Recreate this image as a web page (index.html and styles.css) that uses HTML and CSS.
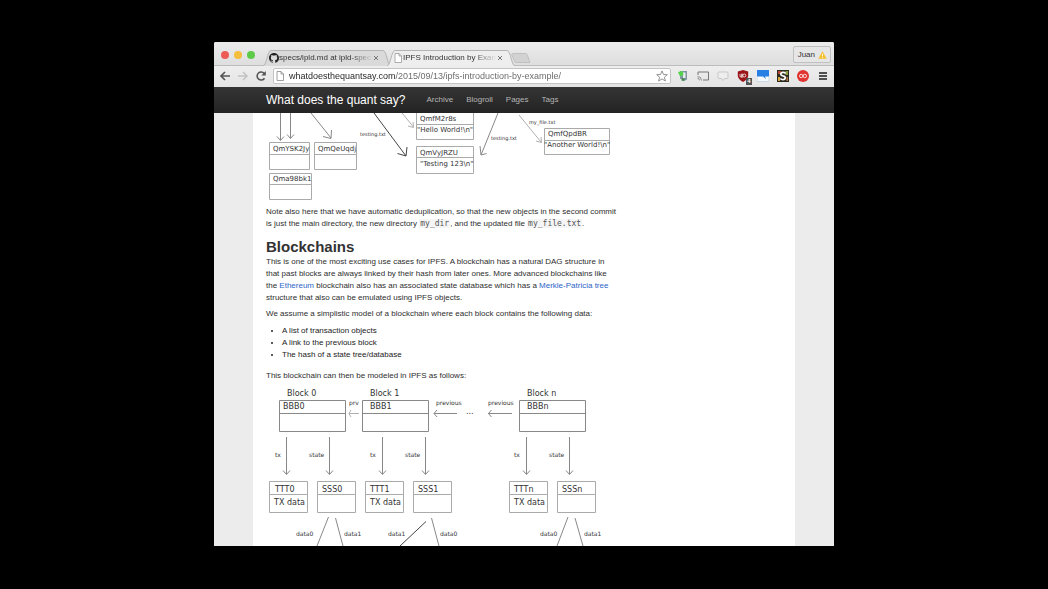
FILE: index.html
```
<!DOCTYPE html>
<html lang="en">
<head>
<meta charset="utf-8">
<title>IPFS Introduction by Example</title>
<link rel="stylesheet" href="styles.css">
</head>
<body>
<div class="window">
  <header class="tabstrip">
    <div class="lights"><button class="light red" aria-label="Close"></button><button class="light yellow" aria-label="Minimize"></button><button class="light green" aria-label="Zoom"></button></div>
    <div class="tabs">
      <div class="tab">
        <svg class="tab-shape" viewBox="0 0 128 16" preserveAspectRatio="none"><path d="M0 16 C4 15 4 1 8 .5 H120 C124 1 124 15 128 16" fill="#dadada" stroke="#b4b4b4"/></svg>
        <svg class="icon10" viewBox="0 0 16 16"><path fill="#222" d="M8 0C3.58 0 0 3.58 0 8c0 3.54 2.29 6.53 5.47 7.59.4.07.55-.17.55-.38 0-.19-.01-.82-.01-1.49-2.01.37-2.53-.49-2.69-.94-.09-.23-.48-.94-.82-1.13-.28-.15-.68-.52-.01-.53.63-.01 1.08.58 1.23.82.72 1.21 1.87.87 2.33.66.07-.52.28-.87.51-1.07-1.78-.2-3.64-.89-3.64-3.95 0-.87.31-1.59.82-2.15-.08-.2-.36-1.02.08-2.12 0 0 .67-.21 2.2.82a7.6 7.6 0 0 1 4 0c1.53-1.04 2.2-.82 2.2-.82.44 1.1.16 1.92.08 2.12.51.56.82 1.27.82 2.15 0 3.07-1.87 3.75-3.65 3.95.29.25.54.73.54 1.48 0 1.07-.01 1.93-.01 2.2 0 .21.15.46.55.38A8 8 0 0 0 16 8c0-4.42-3.58-8-8-8z"/></svg>
        <span class="tab-title">specs/ipld.md at ipld-spec</span>
        <button class="close" aria-label="Close tab"><svg viewBox="0 0 6 6"><path d="M1 1 5 5M5 1 1 5" stroke="#777"/></svg></button>
      </div>
      <div class="tab active">
        <svg class="tab-shape" viewBox="0 0 128 16" preserveAspectRatio="none"><path d="M0 16 C4 15 4 1 8 .5 H120 C124 1 124 15 128 16" fill="#eee" stroke="#b4b4b4"/></svg>
        <svg class="icon10" viewBox="0 0 10 10"><path d="M2 .5H6L8.500 3V9.500H2ZM6 .5V3H8.500" fill="#fff" stroke="#999" stroke-width=".8"/></svg>
        <span class="tab-title">IPFS Introduction by Exam</span>
        <button class="close" aria-label="Close tab"><svg viewBox="0 0 6 6"><path d="M1 1 5 5M5 1 1 5" stroke="#777"/></svg></button>
      </div>
      <button class="newtab" aria-label="New tab"><svg viewBox="0 0 20 10"><path d="M1.500.5H14C16 .5 16 1 17 4L19 9.500H6C4 9.500 3.500 9 3 7L.8 2Q.4.5 1.500.5Z" fill="#d2d2d2" stroke="#c0c0c0"/></svg></button>
    </div>
    <button class="profile">Juan <svg viewBox="0 0 10 9"><path d="M5 .4 9.700 8.600H.3Z" fill="#f6c12d"/><path d="M5 3V6M5 6.800V7.800" stroke="#fff" stroke-width="1"/></svg></button>
  </header>

  <div class="toolbar">
    <button class="tool" aria-label="Back"><svg viewBox="0 0 12 12"><path d="M11 6H2M6 2 2 6 6 10" fill="none" stroke="#555" stroke-width="1.700"/></svg></button>
    <button class="tool" aria-label="Forward"><svg viewBox="0 0 12 12"><path d="M1 6H10M6 2 10 6 6 10" fill="none" stroke="#c2c2c2" stroke-width="1.500"/></svg></button>
    <button class="tool" aria-label="Reload"><svg viewBox="0 0 12 12"><path d="M9.500 8.200A4 4 0 1 1 9.200 3.500" fill="none" stroke="#555" stroke-width="1.600"/><path d="M10.800 1V5.500H6.300Z" fill="#555"/></svg></button>
    <div class="address">
      <svg class="icon10" viewBox="0 0 10 10"><path d="M2 .5H6L8.500 3V9.500H2ZM6 .5V3H8.500" fill="#fff" stroke="#888" stroke-width=".8"/></svg>
      <input class="url" type="text" aria-label="Address" value="whatdoesthequantsay.com/2015/09/13/ipfs-introduction-by-example/">
      <button class="tool" aria-label="Bookmark"><svg viewBox="0 0 12 12"><path d="M6 .9 7.500 4.500 11.300 4.700 8.400 7.200 9.400 11 6 8.900 2.600 11 3.600 7.200.7 4.700 4.500 4.500Z" fill="#fff" stroke="#888" stroke-width=".9"/></svg></button>
    </div>
    <div class="extensions">
      <button class="tool" aria-label="Notes"><svg viewBox="0 0 12 12"><path d="M3 1H10V9.500L7 11V9H3Z" fill="#8296a0"/><path d="M6 2.500H8.500V8H6Z" fill="#e7eef0"/><path d="M1 2 5.500 1 6.500 5 3 6.500Z" fill="#54d34d"/><circle cx="6" cy="9.500" r="1.500" fill="#43884b"/></svg></button>
      <button class="tool" aria-label="Cast"><svg viewBox="0 0 12 12"><path d="M1 5V2H11.500V10H6" fill="none" stroke="#777"/><path d="M.5 6.500A4 4 0 0 1 4.500 10.500M.5 8.300A2 2 0 0 1 2.500 10.300" fill="none" stroke="#777" stroke-width=".8"/></svg></button>
      <button class="tool" aria-label="Comments"><svg viewBox="0 0 12 12"><path d="M2 2H10Q11 2 11 3V7.500Q11 8.500 10 8.500H7.500L6 10.500 4.500 8.500H2Q1 8.500 1 7.500V3Q1 2 2 2Z" fill="#eee" stroke="#c7c7c7"/></svg></button>
      <button class="tool blocker" aria-label="Blocker, 4 blocked"><svg viewBox="0 0 12 12"><path d="M6 0 11.200 1.500V6Q10.500 9.500 6 12 1.500 9.500.8 6V1.500Z" fill="#9a1419"/><path d="M3 4V6Q3 7 4 7T5 6V4M5 3.500V8" fill="none" stroke="#fff" stroke-width=".8"/><circle cx="7.300" cy="5.500" r="1.500" fill="none" stroke="#fff" stroke-width=".8"/></svg><span class="badge">4</span></button>
      <button class="tool" aria-label="Dashboard"><svg viewBox="0 0 12 12"><path d="M0 0H12V12H0Z" fill="#f6f9fc"/><path d="M0 0H12V6.500H8L9 9 6 6.500H0Z" fill="#287fe3"/><path d="M0 6V11.500H12V6" fill="none" stroke="#b5cbe2" stroke-width=".7"/></svg></button>
      <button class="tool" aria-label="Scripts"><svg viewBox="0 0 12 12"><path d="M0 0H12V12H0Z" fill="#292a20"/><path d="M1 1H4V4H1Z" fill="#b94731"/><path d="M8.500 1H11V5H8.500Z" fill="#8a9a41"/><path d="M1 7H3V11H1Z" fill="#d4a33b"/><path d="M9.500 7H11V11H9.500Z" fill="#b87343"/><path d="M8.700 3.500Q7.500 2.200 5.800 2.400 3.700 2.700 3.800 4.300 4 5.500 6 5.900 8.400 6.300 8.300 8 8 9.700 6 9.700 4.500 9.700 3.300 8.500" fill="none" stroke="#fff" stroke-width="1.700"/></svg></button>
      <button class="tool" aria-label="Share"><svg viewBox="0 0 12 12"><circle cx="6" cy="6" r="6" fill="#df3430"/><circle cx="4.200" cy="6" r="1.700" fill="none" stroke="#fff" stroke-width=".8"/><circle cx="7.800" cy="6" r="1.700" fill="none" stroke="#fff" stroke-width=".8"/></svg></button>
      <button class="tool" aria-label="Menu"><svg viewBox="0 0 12 12"><path d="M2 3H10M2 6H10M2 9H10" stroke="#505050" stroke-width="1.800"/></svg></button>
    </div>
  </div>

  <nav class="sitebar">
    <a class="brand" href="#">What does the quant say?</a>
    <a href="#">Archive</a><a href="#">Blogroll</a><a href="#">Pages</a><a href="#">Tags</a>
  </nav>

  <div class="page">
    <main class="article">
      <svg class="diagram objects" width="365" height="88" viewBox="266 113 365 88" role="img" aria-label="Object graph after the second commit">
        <g class="line">
          <path d="M280.500 113V140M277 136.500 280.500 140.500 284 136.500M290.500 113V138M287 134.500 290.500 138.500 294 134.500M311 113 331 138M323 136.500 331 138.500 331.500 130"/>
          <path d="M498 113 481 155M480 146 481 155 486.500 153.500"/>
          <path class="faint" d="M402 113 413.500 127M408 126 413.500 127.500 413 122M519 115 541 142M536 141 541.500 142.500 541 137"/>
          <path class="dark" d="M374 113 406 156M397.500 153.500 406 156 407 147"/>
        </g>
        <g class="box">
          <path d="M269.500 142.500H309.500V169.500H269.500ZM269.500 154.500H309.500M314.500 142.500H356.500V169.500H314.500ZM314.500 154.500H356.500M269.500 173.500H311.500V199.500H269.500ZM269.500 184.500H311.500"/>
          <path d="M416.500 112.500H473.500V139.500H416.500ZM416.500 124.500H473.500M416.500 146.500H473.500V173.500H416.500ZM416.500 157.500H473.500M544.500 128.500H609.500V154.500H544.500ZM544.500 140.500H609.500"/>
        </g>
        <g class="node">
          <text x="273" y="151">QmYSK2Jy</text><text x="318" y="151">QmQeUqdj</text><text x="273" y="181">Qma98bk1</text>
          <text x="420" y="121">QmfM2r8s</text><text x="417" y="132">"Hello World!\n"</text>
          <text x="420" y="155">QmVyJRZU</text><text x="420" y="166">"Testing 123\n"</text>
          <text x="548" y="136">QmfQpdBR</text><text x="544" y="147">"Another World!\n"</text>
        </g>
        <g class="edge"><text x="360" y="136">testing.txt</text><text x="491" y="140">testing.txt</text><text x="529" y="124">my_file.txt</text></g>
      </svg>

      <p class="intro">Note also here that we have automatic deduplication, so that the new objects in the second commit<br>is just the main directory, the new directory <code>my_dir</code>, and the updated file <code>my_file.txt</code>.</p>
      <h1>Blockchains</h1>
      <p>This is one of the most exciting use cases for IPFS. A blockchain has a natural DAG structure in<br>that past blocks are always linked by their hash from later ones. More advanced blockchains like<br>the <a href="#">Ethereum</a> blockchain also has an associated state database which has a <a href="#">Merkle-Patricia tree</a><br>structure that also can be emulated using IPFS objects.</p>
      <p>We assume a simplistic model of a blockchain where each block contains the following data:</p>
      <ul><li>A list of transaction objects</li><li>A link to the previous block</li><li>The hash of a state tree/database</li></ul>
      <p>This blockchain can then be modeled in IPFS as follows:</p>

      <svg class="diagram chain" width="365" height="160" viewBox="266 386 365 160" role="img" aria-label="Blockchain modeled as linked objects">
        <g class="box">
          <path class="strong" d="M279.500 400.500H345.500V431.500H279.500ZM279.500 413.500H345.500M362.500 400.500H428.500V431.500H362.500ZM362.500 413.500H428.500M519.500 400.500H585.500V431.500H519.500ZM519.500 413.500H585.500"/>
          <path d="M269.500 481.500H307.500V512.500H269.500ZM269.500 494.500H307.500M317.500 481.500H355.500V512.500H317.500ZM317.500 494.500H355.500M365.500 481.500H403.500V512.500H365.500ZM365.500 494.500H403.500M413.500 481.500H451.500V512.500H413.500ZM413.500 494.500H451.500M509.500 481.500H547.500V512.500H509.500ZM509.500 494.500H547.500M557.500 481.500H595.500V512.500H557.500ZM557.500 494.500H595.500"/>
        </g>
        <g class="line">
          <path d="M286.500 437V474M283 470.500 286.500 474.500 290 470.500M329.500 437V474M326 470.500 329.500 474.500 333 470.500M382.500 437V474M379 470.500 382.500 474.500 386 470.500M425.500 437V474M422 470.500 425.500 474.500 429 470.500M526.500 437V474M523 470.500 526.500 474.500 530 470.500M569.500 437V474M566 470.500 569.500 474.500 573 470.500"/>
          <path d="M434 413.500H457M437 410 434 413.500 437 417M488 413.500H512M491.500 410 488.500 413.500 491.500 417"/>
          <path class="faint" d="M349 413.500H359M351 410 349 413.500 351 417"/>
          <path d="M328.500 517 317 546M335.500 518 343 546M431.500 518 439 546M568 517 557 546M575 518 583 546"/>
          <path class="dark" d="M426 521.500 400 546"/>
        </g>
        <g class="node">
          <text x="287" y="396">Block 0</text><text x="370" y="396">Block 1</text><text x="527" y="396">Block n</text>
          <text x="283" y="409">BBB0</text><text x="370" y="409">BBB1</text><text x="527" y="409">BBBn</text>
          <text x="275" y="492">TTT0</text><text x="322" y="492">SSS0</text><text x="370" y="492">TTT1</text><text x="418" y="492">SSS1</text><text x="514" y="492">TTTn</text><text x="562" y="492">SSSn</text>
          <text x="274" y="505">TX data</text><text x="370" y="505">TX data</text><text x="514" y="505">TX data</text>
          <text x="466" y="414">...</text>
        </g>
        <g class="edge">
          <text x="349" y="405">prv</text><text x="436" y="405">previous</text><text x="488" y="405">previous</text>
          <text x="275" y="457">tx</text><text x="309" y="457">state</text><text x="370" y="457">tx</text><text x="405" y="457">state</text><text x="514" y="457">tx</text><text x="549" y="457">state</text>
          <text x="296" y="536">data0</text><text x="344" y="536">data1</text><text x="388" y="536">data1</text><text x="440" y="536">data0</text><text x="540" y="536">data0</text><text x="584" y="536">data1</text>
        </g>
      </svg>
    </main>
  </div>
</div>
</body>
</html>
```

FILE: styles.css
```
* { box-sizing: border-box; }

body {
  margin: 0;
  height: 100vh;
  padding: 42px 214px 43px;
  background: #000;
  display: flex;
  font-family: "Liberation Sans", Arial, sans-serif;
  font-size: 8px;
  line-height: 12px;
  color: #2e2e2e;
}

button {
  border: 0;
  padding: 0;
  background: none;
  font: inherit;
  color: inherit;
}

svg { display: block; flex: none; }

.window {
  flex: 1;
  min-width: 0;
  display: flex;
  flex-direction: column;
  overflow: hidden;
  border-radius: 2px 2px 0 0;
  background: #fff;
}

.tabstrip {
  flex: none;
  height: 24px;
  display: flex;
  align-items: flex-end;
  background: linear-gradient(#ececec, #dedede);
  border-bottom: 1px solid #bdbdbd;
}

.lights {
  display: flex;
  gap: 5px;
  padding: 0 8px 6px 7px;
}

.light {
  width: 8px;
  height: 8px;
  border-radius: 50%;
}

.red { background: #ee5b54; }
.yellow { background: #f4bd3c; }
.green { background: #5ecb48; }

.tabs {
  flex: 1;
  display: flex;
  align-items: flex-end;
  margin-bottom: -1px;
}

.tab {
  position: relative;
  width: 128px;
  height: 16px;
  padding: 0 12px 0 6px;
  display: flex;
  align-items: center;
  margin-right: -4px;
}

.tab.active { z-index: 1; }

.tab-shape {
  position: absolute;
  inset: 0;
  width: 100%;
  height: 100%;
}

.tab > :not(.tab-shape) { position: relative; }

.icon10 { width: 10px; height: 10px; }

.tab-title {
  flex: 1;
  overflow: hidden;
  white-space: nowrap;
  color: #333;
  mask-image: linear-gradient(90deg, #000 75%, transparent);
}

.close svg { width: 6px; height: 6px; }

.newtab { padding: 0 0 3px; }
.newtab svg { width: 20px; height: 10px; }

.profile {
  display: flex;
  align-items: center;
  gap: 3px;
  height: 17px;
  padding: 0 3px 0 4px;
  margin: 0 3px 2px 0;
  border: 1px solid #c0c0c0;
  border-radius: 2px;
  background: #e6e6e6;
  color: #333;
}

.profile svg { width: 9px; height: 8px; }

.toolbar {
  flex: none;
  height: 21px;
  padding: 0 5px 1px;
  display: flex;
  align-items: center;
  gap: 6px;
  background: linear-gradient(#eee, #e4e4e4);
}

.tool { display: block; }
.tool svg { width: 12px; height: 12px; }

.address {
  flex: 1;
  min-width: 0;
  height: 16px;
  padding: 0 2px 0 1px;
  display: flex;
  align-items: center;
  gap: 4px;
  border: 1px solid #c4c4c4;
  border-radius: 2px;
  background: #fff;
}

.url {
  flex: 1;
  min-width: 0;
  border: 0;
  padding: 0;
  font: 9px/14px "Liberation Sans", Arial, sans-serif;
  color: transparent;
  background: linear-gradient(90deg, #222 106px, #666 106px);
  background-clip: text;
}

.extensions {
  display: flex;
  gap: 8px;
}

.blocker { position: relative; }

.badge {
  position: absolute;
  right: -3px;
  bottom: -3px;
  width: 6px;
  height: 7px;
  background: #555;
  color: #fff;
  font-size: 6px;
  line-height: 7px;
  font-weight: 700;
}

.sitebar {
  flex: none;
  height: 26px;
  padding-left: 52px;
  display: flex;
  align-items: center;
  gap: 13px;
  background: linear-gradient(#353535, #232323);
}

.sitebar a {
  color: #b5b5b5;
  text-decoration: none;
}

.sitebar .brand {
  color: #fff;
  font-size: 12px;
  line-height: 16px;
  margin-right: 8px;
}

.page {
  flex: 1;
  min-height: 0;
  overflow: hidden;
  padding: 0 39px;
  background: #ececec;
}

.article {
  min-height: 100%;
  padding-left: 13px;
  background: #fff;
  white-space: nowrap;
}

.article p { margin: 0 0 4px; }
.article .intro { margin: 5px 0 7px; }

.article a {
  color: #2c66c8;
  text-decoration: none;
}

code {
  padding: 0 1px;
  background: #f5f5f5;
  color: #555;
  font: 8px/10px "DejaVu Sans Mono", monospace;
}

h1 {
  margin: 0;
  font-size: 15px;
  line-height: 19px;
  color: #333;
}

ul {
  margin: 5px 0 9px;
  padding-left: 16px;
  color: #222;
}

.box path, .line path {
  fill: none;
  stroke: #aaa;
}

.box .strong, .line path { stroke: #888; }
.line .faint { stroke: #b0b0b0; }
.line .dark { stroke: #444; }

.diagram text {
  font-family: "DejaVu Sans", sans-serif;
  fill: #333;
}

.objects .node text { font-size: 7px; }
.objects .edge text { font-size: 5px; }
.chain .node text { font-size: 8px; }
.chain .edge text { font-size: 6px; }
```
